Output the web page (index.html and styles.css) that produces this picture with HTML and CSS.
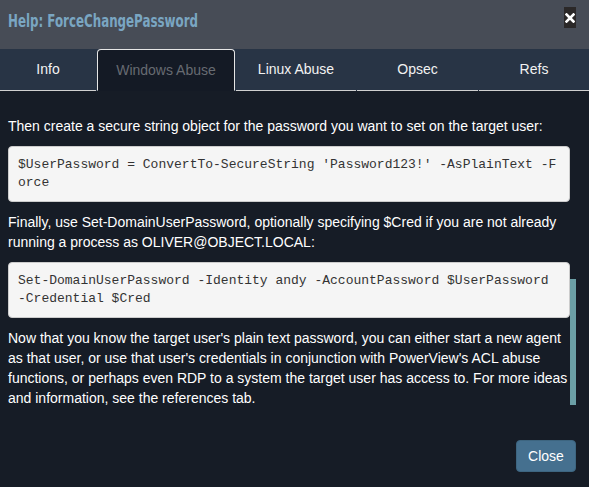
FILE: index.html
```html
<!DOCTYPE html>
<html>
<head>
<meta charset="utf-8">
<link rel="stylesheet" href="styles.css">
</head>
<body>
<div class="modal">
  <div class="modal-header">
    <h4 class="modal-title">Help: ForceChangePassword</h4>
    <button class="close-x" aria-label="close">
      <svg width="10" height="10" viewBox="0 0 10 10"><path d="M1.5 1.5 L8.5 8.5 M8.5 1.5 L1.5 8.5" stroke="#fff" stroke-width="2.6" stroke-linecap="square"/></svg>
    </button>
  </div>
  <div class="tabs">
    <div class="tab">Info</div>
    <div class="tab active">Windows Abuse</div>
    <div class="tab">Linux Abuse</div>
    <div class="tab">Opsec</div>
    <div class="tab">Refs</div>
  </div>
  <div class="modal-body">
    <div class="content">
      <p>Then create a secure string object for the password you want to set on the target user:</p>
      <pre>$UserPassword = ConvertTo-SecureString 'Password123!' -AsPlainText -Force</pre>
      <p>Finally, use Set-DomainUserPassword, optionally specifying $Cred if you are not already running a process as OLIVER@OBJECT.LOCAL:</p>
      <pre>Set-DomainUserPassword -Identity andy -AccountPassword $UserPassword -Credential $Cred</pre>
      <p>Now that you know the target user's plain text password, you can either start a new agent as that user, or use that user's credentials in conjunction with PowerView's ACL abuse functions, or perhaps even RDP to a system the target user has access to. For more ideas and information, see the references tab.</p>
    </div>
    <div class="scroll-thumb"></div>
  </div>
  <div class="modal-footer">
    <button class="btn-close">Close</button>
  </div>
</div>
</body>
</html>
```
FILE: styles.css
```css
html, body {
  margin: 0;
  padding: 0;
  background: #161c26;
}
.modal {
  width: 589px;
  height: 487px;
  display: flex;
  flex-direction: column;
  font-family: "Liberation Sans", Arial, sans-serif;
  font-size: 14px;
  line-height: 20px;
  color: #ffffff;
  background: #161c26;
  overflow: hidden;
}
.modal-header {
  height: 49px;
  flex: none;
  background: #474c56;
  display: flex;
  align-items: flex-start;
  justify-content: space-between;
  padding: 0 13px 0 8px;
  box-sizing: border-box;
}
.modal-title {
  margin: 0;
  padding-top: 10px;
  font-family: "Liberation Sans Narrow", "DejaVu Sans Condensed", sans-serif;
  font-weight: bold;
  font-size: 17px;
  line-height: 23px;
  color: #7aa6c2;
  transform: scaleX(0.775);
  transform-origin: left center;
  white-space: nowrap;
}
.close-x {
  margin-top: 7px;
  width: 12px;
  height: 21px;
  padding: 0;
  border: 0;
  background: #2b2828;
  display: flex;
  align-items: center;
  justify-content: center;
}
.tabs {
  height: 42px;
  flex: none;
  background: #283445;
  display: grid;
  grid-template-columns: 97px 139px 121px 122px 1fr;
}
.tab {
  margin-right: 1px;
  border-bottom: 1px solid #d0d0d0;
  display: flex;
  align-items: center;
  justify-content: center;
  color: #f2f2f2;
  font-size: 14px;
  box-sizing: border-box;
  padding-bottom: 1px;
}
.tab:last-child {
  margin-right: 0;
}
.tab.active {
  margin-right: 1px;
  border: 1px solid #e6e6e6;
  border-bottom-color: transparent;
  border-radius: 4px 4px 0 0;
  background: #141a25;
  color: #676b72;
}
.modal-body {
  flex: 1;
  position: relative;
  overflow: hidden;
}
.content {
  padding: 25px 19px 0 8px;
}
p {
  margin: 0 0 10px;
}
pre {
  margin: 0 0 10px;
  padding: 9px;
  font-family: "Liberation Mono", "DejaVu Sans Mono", monospace;
  font-size: 13px;
  line-height: 18px;
  color: #333333;
  background: #f5f5f5;
  border: 1px solid #cccccc;
  border-radius: 4px;
  white-space: pre-wrap;
  word-break: break-all;
}
.scroll-thumb {
  position: absolute;
  left: 570px;
  top: 188px;
  width: 6px;
  height: 126px;
  background: #6b9fa6;
}
.modal-footer {
  flex: none;
  display: flex;
  justify-content: flex-end;
  padding: 15px 13px 15px 0;
}
.btn-close {
  width: 60px;
  height: 32px;
  padding: 0;
  border: 1px solid #3d6580;
  border-radius: 4px;
  background: #45708f;
  color: #ffffff;
  font-family: "Liberation Sans", Arial, sans-serif;
  font-size: 14px;
}
```
